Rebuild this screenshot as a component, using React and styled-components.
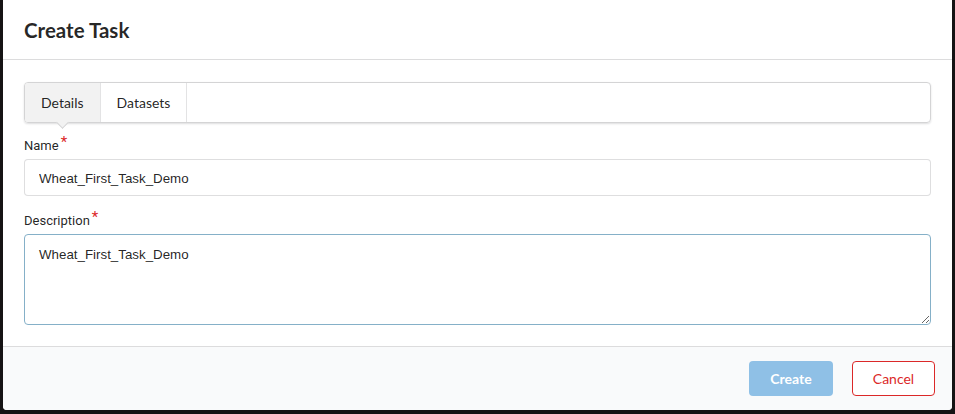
import React, { useState } from "react";
import styled, { createGlobalStyle } from "styled-components";

const GlobalStyle = createGlobalStyle`
  html, body {
    margin: 0;
    padding: 0;
    background: #151314;
  }
  body {
    font-family: Lato, "Open Sans", sans-serif;
    color: rgba(0, 0, 0, 0.87);
  }
  * { box-sizing: border-box; }
`;

const Screen = styled.div`
  width: 955px;
  height: 414px;
  overflow: hidden;
  padding-left: 3px;
`;

const Modal = styled.div`
  width: 949px;
  height: 410px;
  background: #fff;
  border-radius: 0 0 4px 4px;
  display: flex;
  flex-direction: column;
  overflow: hidden;
`;

const Header = styled.div`
  height: 60px;
  padding: 18px 21px 0;
  border-bottom: 1px solid #dcdcdd;
  font-size: 20.5px;
  font-weight: 700;
  line-height: 24px;
  color: rgba(0, 0, 0, 0.85);
`;

const Content = styled.div`
  flex: 1;
  padding: 22px 21px 0;
`;

const Menu = styled.div`
  display: flex;
  height: 41px;
  border: 1px solid #d4d4d5;
  border-radius: 4px;
  box-shadow: 0 1px 2px 0 rgba(34, 36, 38, 0.15);
  margin-bottom: 14px;
`;

const Tab = styled.div`
  position: relative;
  display: flex;
  align-items: center;
  padding: 0 16px;
  font-size: 14px;
  color: rgba(0, 0, 0, 0.87);
  background: ${p => (p.$active ? "#f2f2f2" : "transparent")};
  border-right: 1px solid #e3e3e4;
  border-radius: ${p => (p.$first ? "3px 0 0 3px" : "0")};

  ${p =>
    p.$active &&
    `
    &::after {
      content: "";
      position: absolute;
      left: 50%;
      bottom: -5px;
      width: 8px;
      height: 8px;
      margin-left: -4px;
      background: #f2f2f2;
      border-right: 1px solid #d4d4d5;
      border-bottom: 1px solid #d4d4d5;
      transform: rotate(45deg);
    }
  `}
`;

const Field = styled.div`
  margin-bottom: 16px;
`;

const Label = styled.label`
  display: block;
  font-family: Roboto, Lato, sans-serif;
  font-size: 13px;
  line-height: 17px;
  margin-bottom: 5px;
  color: rgba(0, 0, 0, 0.87);

  &::after {
    content: "*";
    color: #db2828;
    font-size: 15px;
    margin-left: 2px;
    position: relative;
    top: -3px;
  }
`;

const Input = styled.input`
  display: block;
  width: 100%;
  height: 37px;
  padding: 2px 14px 0;
  font-family: "Liberation Sans", Arial, sans-serif;
  font-size: 13.333px;
  color: rgba(0, 0, 0, 0.87);
  border: 1px solid rgba(34, 36, 38, 0.15);
  border-radius: 4px;
  outline: none;
`;

const TextArea = styled.textarea`
  display: block;
  width: 100%;
  height: 91px;
  padding: 11px 14px;
  font-family: "Liberation Sans", Arial, sans-serif;
  font-size: 13.333px;
  line-height: 17px;
  color: rgba(0, 0, 0, 0.87);
  border: 1px solid #85b0c8;
  border-radius: 4px;
  outline: none;
  resize: vertical;
`;

const Actions = styled.div`
  height: 64px;
  background: #f9fafb;
  border-top: 1px solid #dcdcdd;
  display: flex;
  justify-content: flex-end;
  align-items: center;
  gap: 19px;
  padding: 0 17px 1px;
`;

const Button = styled.button`
  height: 35px;
  width: ${p => p.$width}px;
  font-family: Lato, sans-serif;
  font-size: 14px;
  border-radius: 4px;
  cursor: pointer;
  ${p =>
    p.$primary
      ? `
    background: #8fc0e6;
    color: #fff;
    font-weight: 700;
    border: none;
  `
      : `
    background: #fff;
    color: #db2828;
    font-weight: 400;
    border: 1px solid #db2828;
  `}
`;

export default function App() {
  const [name, setName] = useState("Wheat_First_Task_Demo");
  const [desc, setDesc] = useState("Wheat_First_Task_Demo");

  return (
    <>
      <GlobalStyle />
      <Screen>
        <Modal>
          <Header>Create Task</Header>
          <Content>
            <Menu>
              <Tab $active $first>Details</Tab>
              <Tab>Datasets</Tab>
            </Menu>
            <Field>
              <Label>Name</Label>
              <Input value={name} onChange={e => setName(e.target.value)} />
            </Field>
            <Field>
              <Label>Description</Label>
              <TextArea value={desc} onChange={e => setDesc(e.target.value)} />
            </Field>
          </Content>
          <Actions>
            <Button $primary $width={84}>Create</Button>
            <Button $width={83}>Cancel</Button>
          </Actions>
        </Modal>
      </Screen>
    </>
  );
}
